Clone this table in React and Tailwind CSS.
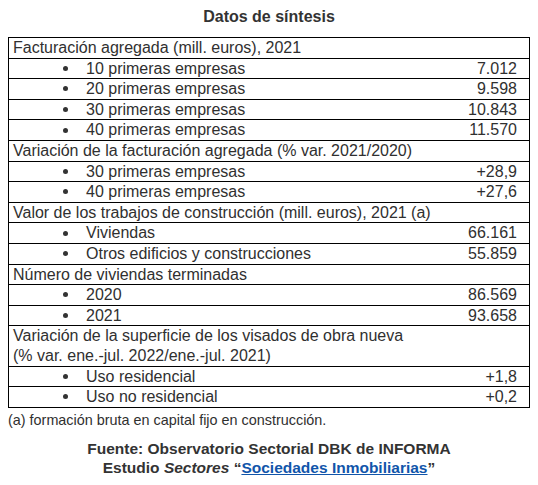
import React from 'react';

const rows = [
  { label: 'Facturación agregada (mill. euros), 2021' },
  { label: '10 primeras empresas', value: '7.012', bullet: true },
  { label: '20 primeras empresas', value: '9.598', bullet: true },
  { label: '30 primeras empresas', value: '10.843', bullet: true },
  { label: '40 primeras empresas', value: '11.570', bullet: true },
  { label: 'Variación de la facturación agregada (% var. 2021/2020)' },
  { label: '30 primeras empresas', value: '+28,9', bullet: true },
  { label: '40 primeras empresas', value: '+27,6', bullet: true },
  { label: 'Valor de los trabajos de construcción (mill. euros), 2021 (a)' },
  { label: 'Viviendas', value: '66.161', bullet: true },
  { label: 'Otros edificios y construcciones', value: '55.859', bullet: true },
  { label: 'Número de viviendas terminadas' },
  { label: '2020', value: '86.569', bullet: true },
  { label: '2021', value: '93.658', bullet: true },
  {
    label: 'Variación de la superficie de los visados de obra nueva',
    label2: '(% var. ene.-jul. 2022/ene.-jul. 2021)',
  },
  { label: 'Uso residencial', value: '+1,8', bullet: true },
  { label: 'Uso no residencial', value: '+0,2', bullet: true },
];

function Row({ row, last }) {
  return (
    <div className={`flex leading-[19.6px] ${last ? '' : 'border-b border-black'}`}>
      {row.bullet ? (
        <div className="flex flex-1 items-center">
          <span className="w-[77px] shrink-0 pl-[54px]">
            <span className="block h-[5px] w-[5px] rounded-full bg-[#333]" />
          </span>
          <span>{row.label}</span>
        </div>
      ) : (
        <div className="flex-1 pl-[4px]">
          <div>{row.label}</div>
          {row.label2 && <div>{row.label2}</div>}
        </div>
      )}
      {row.value && <div className="pr-[12px] text-right">{row.value}</div>}
    </div>
  );
}

export default function App() {
  return (
    <div
      className="w-[538px] h-[485px] bg-white text-[#303030] pt-[7px]"
      style={{ fontFamily: '"Liberation Sans", Arial, sans-serif' }}
    >
      <h1 className="text-center text-[16px] font-bold leading-[20px] text-[#333]">
        Datos de síntesis
      </h1>
      <div className="mx-[8px] mt-[10px] border border-black text-[16px]">
        {rows.map((r, i) => (
          <Row key={i} row={r} last={i === rows.length - 1} />
        ))}
      </div>
      <p className="mt-[3px] pl-[8px] text-[14.4px] leading-[18px]">
        (a) formación bruta en capital fijo en construcción.
      </p>
      <div className="mt-[10px] text-center text-[15.5px] font-bold leading-[19px] text-[#333]">
        <div>Fuente: Observatorio Sectorial DBK de INFORMA</div>
        <div>
          Estudio <i>Sectores</i> “
          <a href="#" className="text-[#1155aa] underline">
            Sociedades Inmobiliarias
          </a>
          ”
        </div>
      </div>
    </div>
  );
}
